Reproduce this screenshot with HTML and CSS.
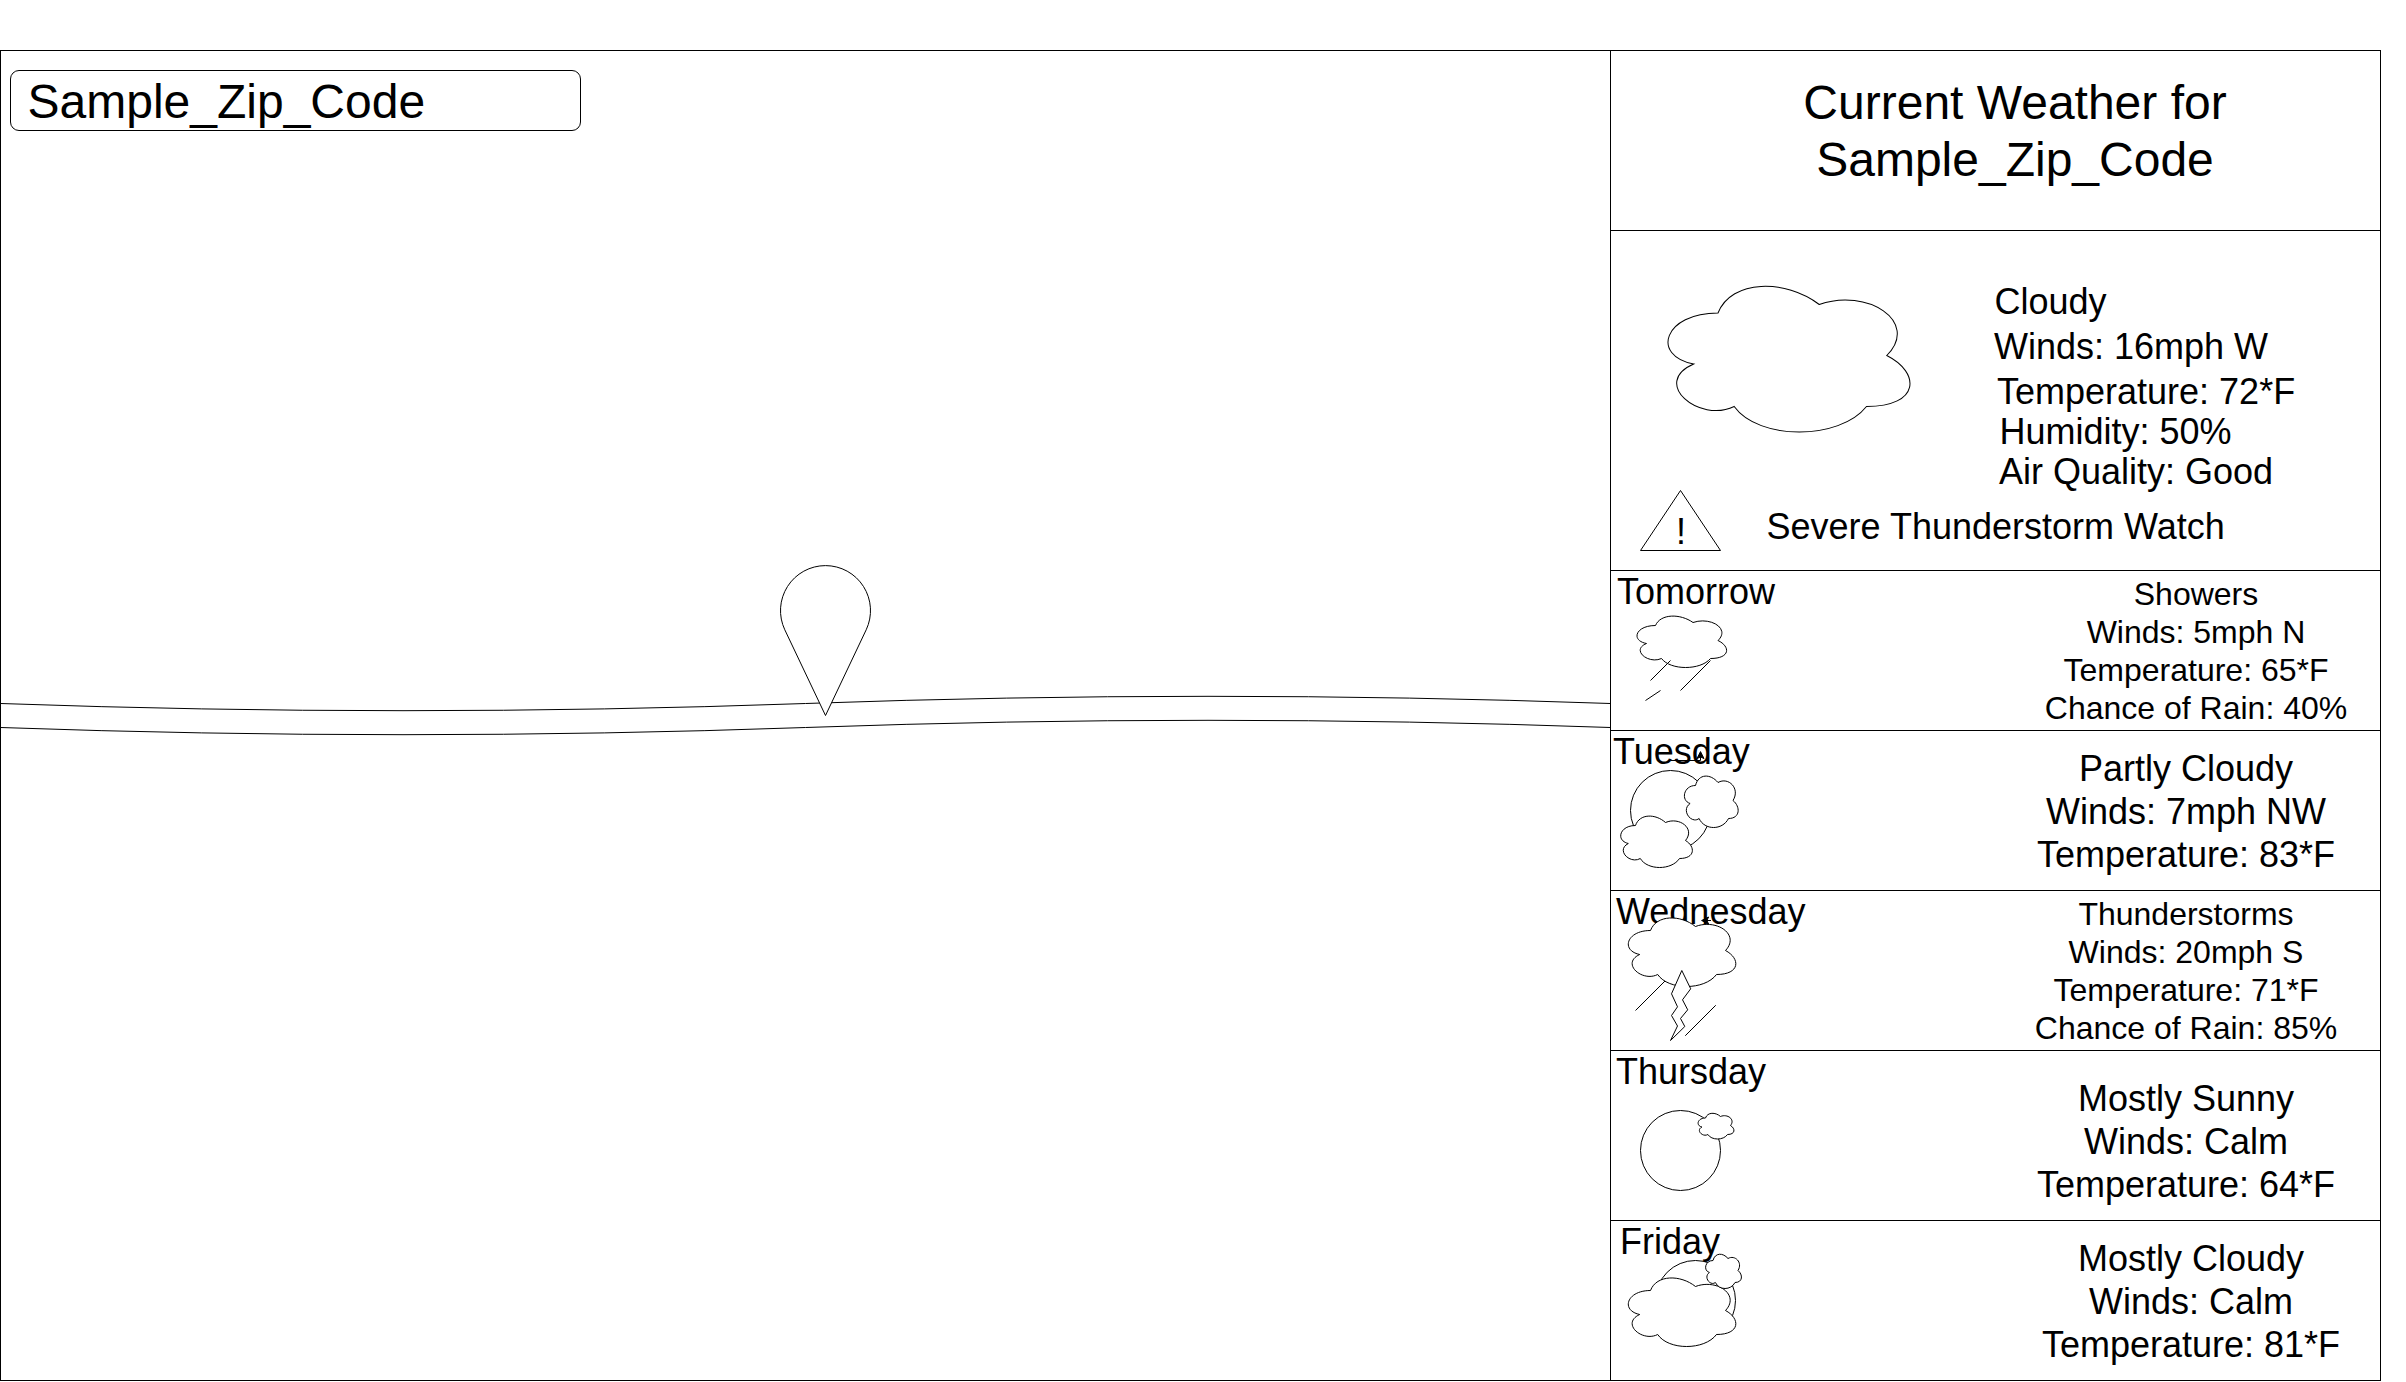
FILE: index.html
```html
<!DOCTYPE html>
<html lang="en">
<head>
<meta charset="utf-8">
<title>Weather</title>
<link rel="stylesheet" href="styles.css">
</head>
<body>
<svg class="defs" aria-hidden="true">
  <defs>
    <symbol id="cloud" viewBox="0 0 100 100" preserveAspectRatio="none" overflow="visible">
      <path vector-effect="non-scaling-stroke" d="M25 25C5 25 0 50 16 55C0 66 18 90 31 80C40 100 70 100 80 80C100 80 100 60 87.5 50C100 30 80 10 62.5 20C50 5 30 5 25 25Z"/>
    </symbol>
  </defs>
</svg>
<div class="app">
  <main class="map">
    <svg class="canvas" viewBox="1 51 1609 1329">
      <path d="M.5 703.5Q201.75 710.7 403 710.7Q604.25 710.7 805.5 703.5Q1006.75 696.3 1208 696.3Q1409.25 696.3 1610.5 703.5V727.5Q1409.25 720.3 1208 720.3Q1006.75 720.3 805.5 727.5Q604.25 734.7 403 734.7Q201.75 734.7 .5 727.5Z"/>
      <path d="M825.5 715.5L784.8 629.8A45 45 0 1 1 866.2 629.8Z"/>
    </svg>
    <div class="search">Sample_Zip_Code</div>
  </main>
  <aside class="sidebar">
    <h1 class="title">Current Weather for<br>Sample_Zip_Code</h1>
    <section class="current">
      <svg class="canvas" viewBox="1611 231 769 339">
        <use href="#cloud" x="1650.5" y="270.5" width="270" height="170"/>
        <path d="M1640.5 550.5L1680.5 490.5L1720.5 550.5Z"/>
      </svg>
      <ul class="facts">
        <li class="sky">Cloudy</li>
        <li class="wind">Winds: 16mph W</li>
        <li class="temp">Temperature: 72*F</li>
        <li class="humidity">Humidity: 50%</li>
        <li class="air">Air Quality: Good</li>
      </ul>
      <p class="alert">Severe Thunderstorm Watch</p>
      <span class="bang">!</span>
    </section>
    <section class="day tomorrow">
      <h2>Tomorrow</h2>
      <p class="summary small">Showers<br>Winds: 5mph N<br>Temperature: 65*F<br>Chance of Rain: 40%</p>
      <svg class="canvas" viewBox="1611 571 769 159">
        <use href="#cloud" x="1630.5" y="610.5" width="100" height="60"/>
        <path d="M1670.5 660.5L1650.5 680.5M1710.5 660.5L1680.5 690.5M1660.5 690.5L1645.5 700.5"/>
      </svg>
    </section>
    <section class="day tuesday">
      <h2>Tuesday</h2>
      <p class="summary">Partly Cloudy<br>Winds: 7mph NW<br>Temperature: 83*F</p>
      <svg class="canvas" viewBox="1611 731 769 159">
        <circle cx="1670.5" cy="810.5" r="40"/>
        <use href="#cloud" x="1680.5" y="770.5" width="60" height="60"/>
        <use href="#cloud" x="1615.5" y="810.5" width="80" height="60"/>
        <path class="open" d="M1670.5 760.5H1700.5V757"/>
        <path class="solid" d="M1700.5 751.6L1704 758.6L1700.5 756.9L1697 758.6Z"/>
      </svg>
    </section>
    <section class="day wednesday">
      <h2>Wednesday</h2>
      <p class="summary small">Thunderstorms<br>Winds: 20mph S<br>Temperature: 71*F<br>Chance of Rain: 85%</p>
      <svg class="canvas" viewBox="1611 891 769 159">
        <path d="M1675.5 970.5L1635.5 1010.5"/>
        <path class="solid" d="M1701.6 920.5L1708.6 917L1706.9 920.5L1708.6 924Z"/>
        <path d="M1706.9 920.5H1711"/>
        <use href="#cloud" x="1620.5" y="910.5" width="120" height="80"/>
        <path d="M1715.5 1005.5L1685.5 1035.5"/>
        <path d="M1715.5 1005.5L1685.5 1035.5"/>
        <path d="M1681.8 970.5L1690.7 988.8L1682.5 999.8L1687.7 1009.8L1680.5 1018.5L1684.8 1026.5L1670.5 1040.5L1677.5 1026L1671.5 1015.5L1677.5 1006.8L1671.5 993.8Z"/>
      </svg>
    </section>
    <section class="day thursday">
      <h2>Thursday</h2>
      <p class="summary">Mostly Sunny<br>Winds: Calm<br>Temperature: 64*F</p>
      <svg class="canvas" viewBox="1611 1051 769 169">
        <circle cx="1680.5" cy="1150.5" r="40"/>
        <use href="#cloud" x="1695.5" y="1110.5" width="40" height="30"/>
      </svg>
    </section>
    <section class="day friday">
      <h2>Friday</h2>
      <p class="summary">Mostly Cloudy<br>Winds: Calm<br>Temperature: 81*F</p>
      <svg class="canvas" viewBox="1611 1221 769 159">
        <circle class="open" cx="1695.5" cy="1300.5" r="40"/>
        <use href="#cloud" x="1620.5" y="1270.5" width="120" height="80"/>
        <use href="#cloud" x="1703" y="1250.5" width="40" height="40"/>
      </svg>
    </section>
  </aside>
</div>
</body>
</html>
```
FILE: styles.css
```css
* { box-sizing: border-box; margin: 0; padding: 0; }

body {
  background: #fff;
  color: #000;
  font-family: "Liberation Sans", Arial, sans-serif;
  font-size: 36px;
  line-height: 1.2;
}

.defs { position: absolute; width: 0; height: 0; }

.app {
  display: flex;
  width: 2381px;
  height: 1331px;
  margin-top: 50px;
  border: 1px solid #000;
}

.map { position: relative; flex: 1; padding: 19px 9px; }

.search {
  position: relative;
  width: 571px;
  height: 61px;
  padding: 2px 16.5px;
  border: 1px solid #000;
  border-radius: 9px;
  font-size: 48px;
}

.sidebar {
  display: flex;
  flex-direction: column;
  width: 770px;
  border-left: 1px solid #000;
}

/* Drawings share the pixel grid of the whole page. */
.canvas {
  position: absolute;
  inset: 0;
  width: 100%;
  height: 100%;
  fill: #fff;
  stroke: #000;
}
.canvas .open { fill: none; }
.canvas .solid { fill: #000; }

.title {
  height: 179px;
  padding: 23px 0 0 39px;
  font-size: 48px;
  font-weight: 400;
  line-height: 57px;
  text-align: center;
}

.current {
  position: relative;
  height: 340px;
  border-top: 1px solid #000;
}

.facts {
  position: relative;
  display: flex;
  flex-direction: column;
  padding-top: 49px;
  list-style: none;
}
.facts li { height: 40px; white-space: nowrap; }
.facts .sky { height: 45px; padding-left: 383.5px; }
.facts .wind { height: 45px; padding-left: 383px; }
.facts .temp { padding-left: 386px; }
.facts .humidity { padding-left: 388.5px; }
.facts .air { padding-left: 388px; }

.alert { position: relative; padding: 15px 0 0 155.5px; }

/* Sits on the warning triangle. */
.bang {
  position: absolute;
  top: 279px;
  left: 65px;
}

.day {
  position: relative;
  display: flex;
  justify-content: space-between;
  align-items: flex-start;
  height: 160px;
  border-top: 1px solid #000;
}
.day h2 { margin-top: -1px; font-size: 36px; font-weight: 400; }
.summary { width: 360px; margin: 16px 14px 0 0; text-align: center; }
.summary.small { margin-top: 4px; font-size: 32px; line-height: 38px; }

.tomorrow h2 { padding-left: 6px; }
.tomorrow .summary { margin-right: 4px; }
.tuesday h2 { padding-left: 2px; }
.wednesday h2 { padding-left: 5px; }
.thursday { height: 170px; }
.thursday h2 { padding-left: 5px; }
.thursday .summary { margin-top: 26px; }
.friday h2 { padding-left: 9px; }
.friday .summary { margin-right: 9px; }
```
